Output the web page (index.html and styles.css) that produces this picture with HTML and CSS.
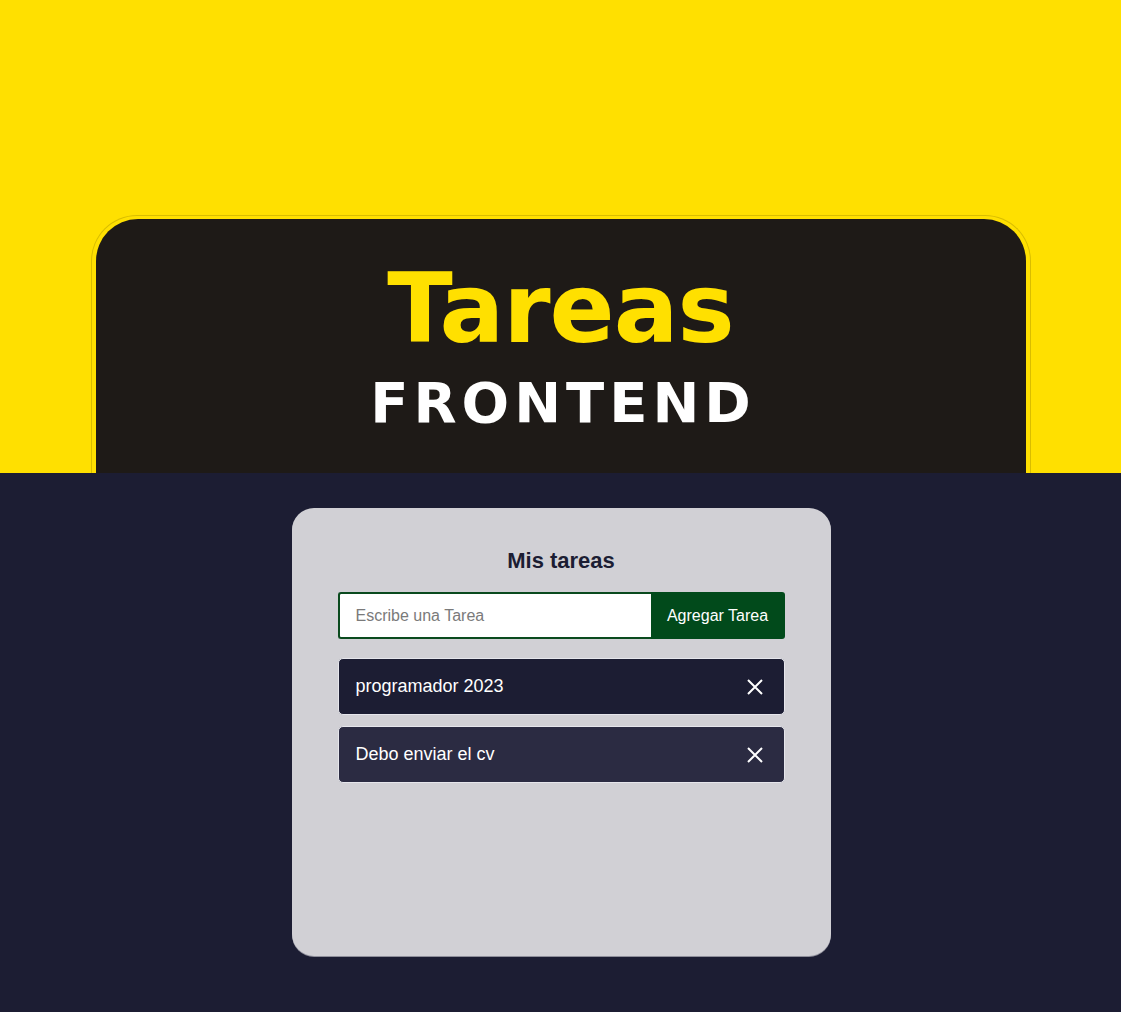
FILE: index.html
```html
<!DOCTYPE html>
<html lang="es">
<head>
    <meta charset="utf-8">
    <title>Tareas Frontend</title>
    <link rel="stylesheet" href="styles.css">
</head>
<body>
    <header class="banner">
        <div class="frame">
            <div class="frame-inner">
                <h1 class="title">Tareas</h1>
                <h2 class="subtitle">FRONTEND</h2>
            </div>
        </div>
    </header>
    <main class="main">
        <div class="card">
            <h3 class="card-title">Mis tareas</h3>
            <form class="add-form">
                <input type="text" class="add-input" placeholder="Escribe una Tarea">
                <button type="button" class="add-button">Agregar Tarea</button>
            </form>
            <div class="task-list">
                <div class="task">
                    <span class="task-text">programador 2023</span>
                    <svg class="task-close" width="16" height="16" viewBox="0 0 16 16"><path d="M1 1L15 15M15 1L1 15" stroke="#fff" stroke-width="2" fill="none"/></svg>
                </div>
                <div class="task task-alt">
                    <span class="task-text">Debo enviar el cv</span>
                    <svg class="task-close" width="16" height="16" viewBox="0 0 16 16"><path d="M1 1L15 15M15 1L1 15" stroke="#fff" stroke-width="2" fill="none"/></svg>
                </div>
            </div>
        </div>
    </main>
</body>
</html>
```

FILE: styles.css
```css
* { margin: 0; padding: 0; box-sizing: border-box; }
html, body { width: 100%; height: 100%; }
body { background-color: #1c1d33; font-family: "Liberation Sans", Arial, sans-serif; }

.banner { height: 473px; background-color: #ffe000; padding-top: 215px; display: flex; justify-content: center; }
.frame { width: 940px; border: 1px solid #d9bd00; border-bottom: 0; border-radius: 46px 46px 0 0; padding: 3px 4px 0; display: flex; }
.frame-inner { flex: 1; background-color: #1e1a17; border-radius: 42px 42px 0 0; text-align: center; font-family: "DejaVu Sans", sans-serif; font-weight: bold; }
.title { color: #ffe000; font-size: 96px; line-height: 1; padding-top: 42px; letter-spacing: -1px; }
.subtitle { color: #fff; font-size: 56px; line-height: 1; letter-spacing: 5px; padding-left: 5px; margin-top: 18px; }

.main { display: flex; justify-content: center; padding: 35px 0 0 1px; }
.card { width: 539px; height: 448px; background-color: #d1d0d5; border-radius: 22px; padding: 40px 46px 0; box-shadow: 0 1px 0 #8e8e9a; }
.card-title { text-align: center; font-size: 22px; color: #1c1d33; font-weight: bold; }
.add-form { display: flex; margin-top: 18px; height: 47px; }
.add-input { width: 313px; border: 2px solid #0a4a1e; border-right: 0; border-radius: 3px 0 0 3px; padding: 0 16px; font-size: 16px; font-family: "Liberation Sans", Arial, sans-serif; color: #333; outline: none; }
.add-input::placeholder { color: #7a7a7a; }
.add-button { flex: 1; background-color: #014a1b; color: #fff; font-size: 16px; font-family: "Liberation Sans", Arial, sans-serif; border: 0; border-radius: 0 3px 3px 0; }

.task-list { display: flex; flex-direction: column; gap: 11px; margin-top: 19px; }
.task { height: 57px; background-color: #1c1d33; border: 1px solid #e6e6ec; border-radius: 5px; display: flex; align-items: center; justify-content: space-between; padding: 0 21px 0 17px; color: #fff; font-size: 18px; }
.task-alt { background-color: #2b2b42; }
.task-close { display: block; }
```
